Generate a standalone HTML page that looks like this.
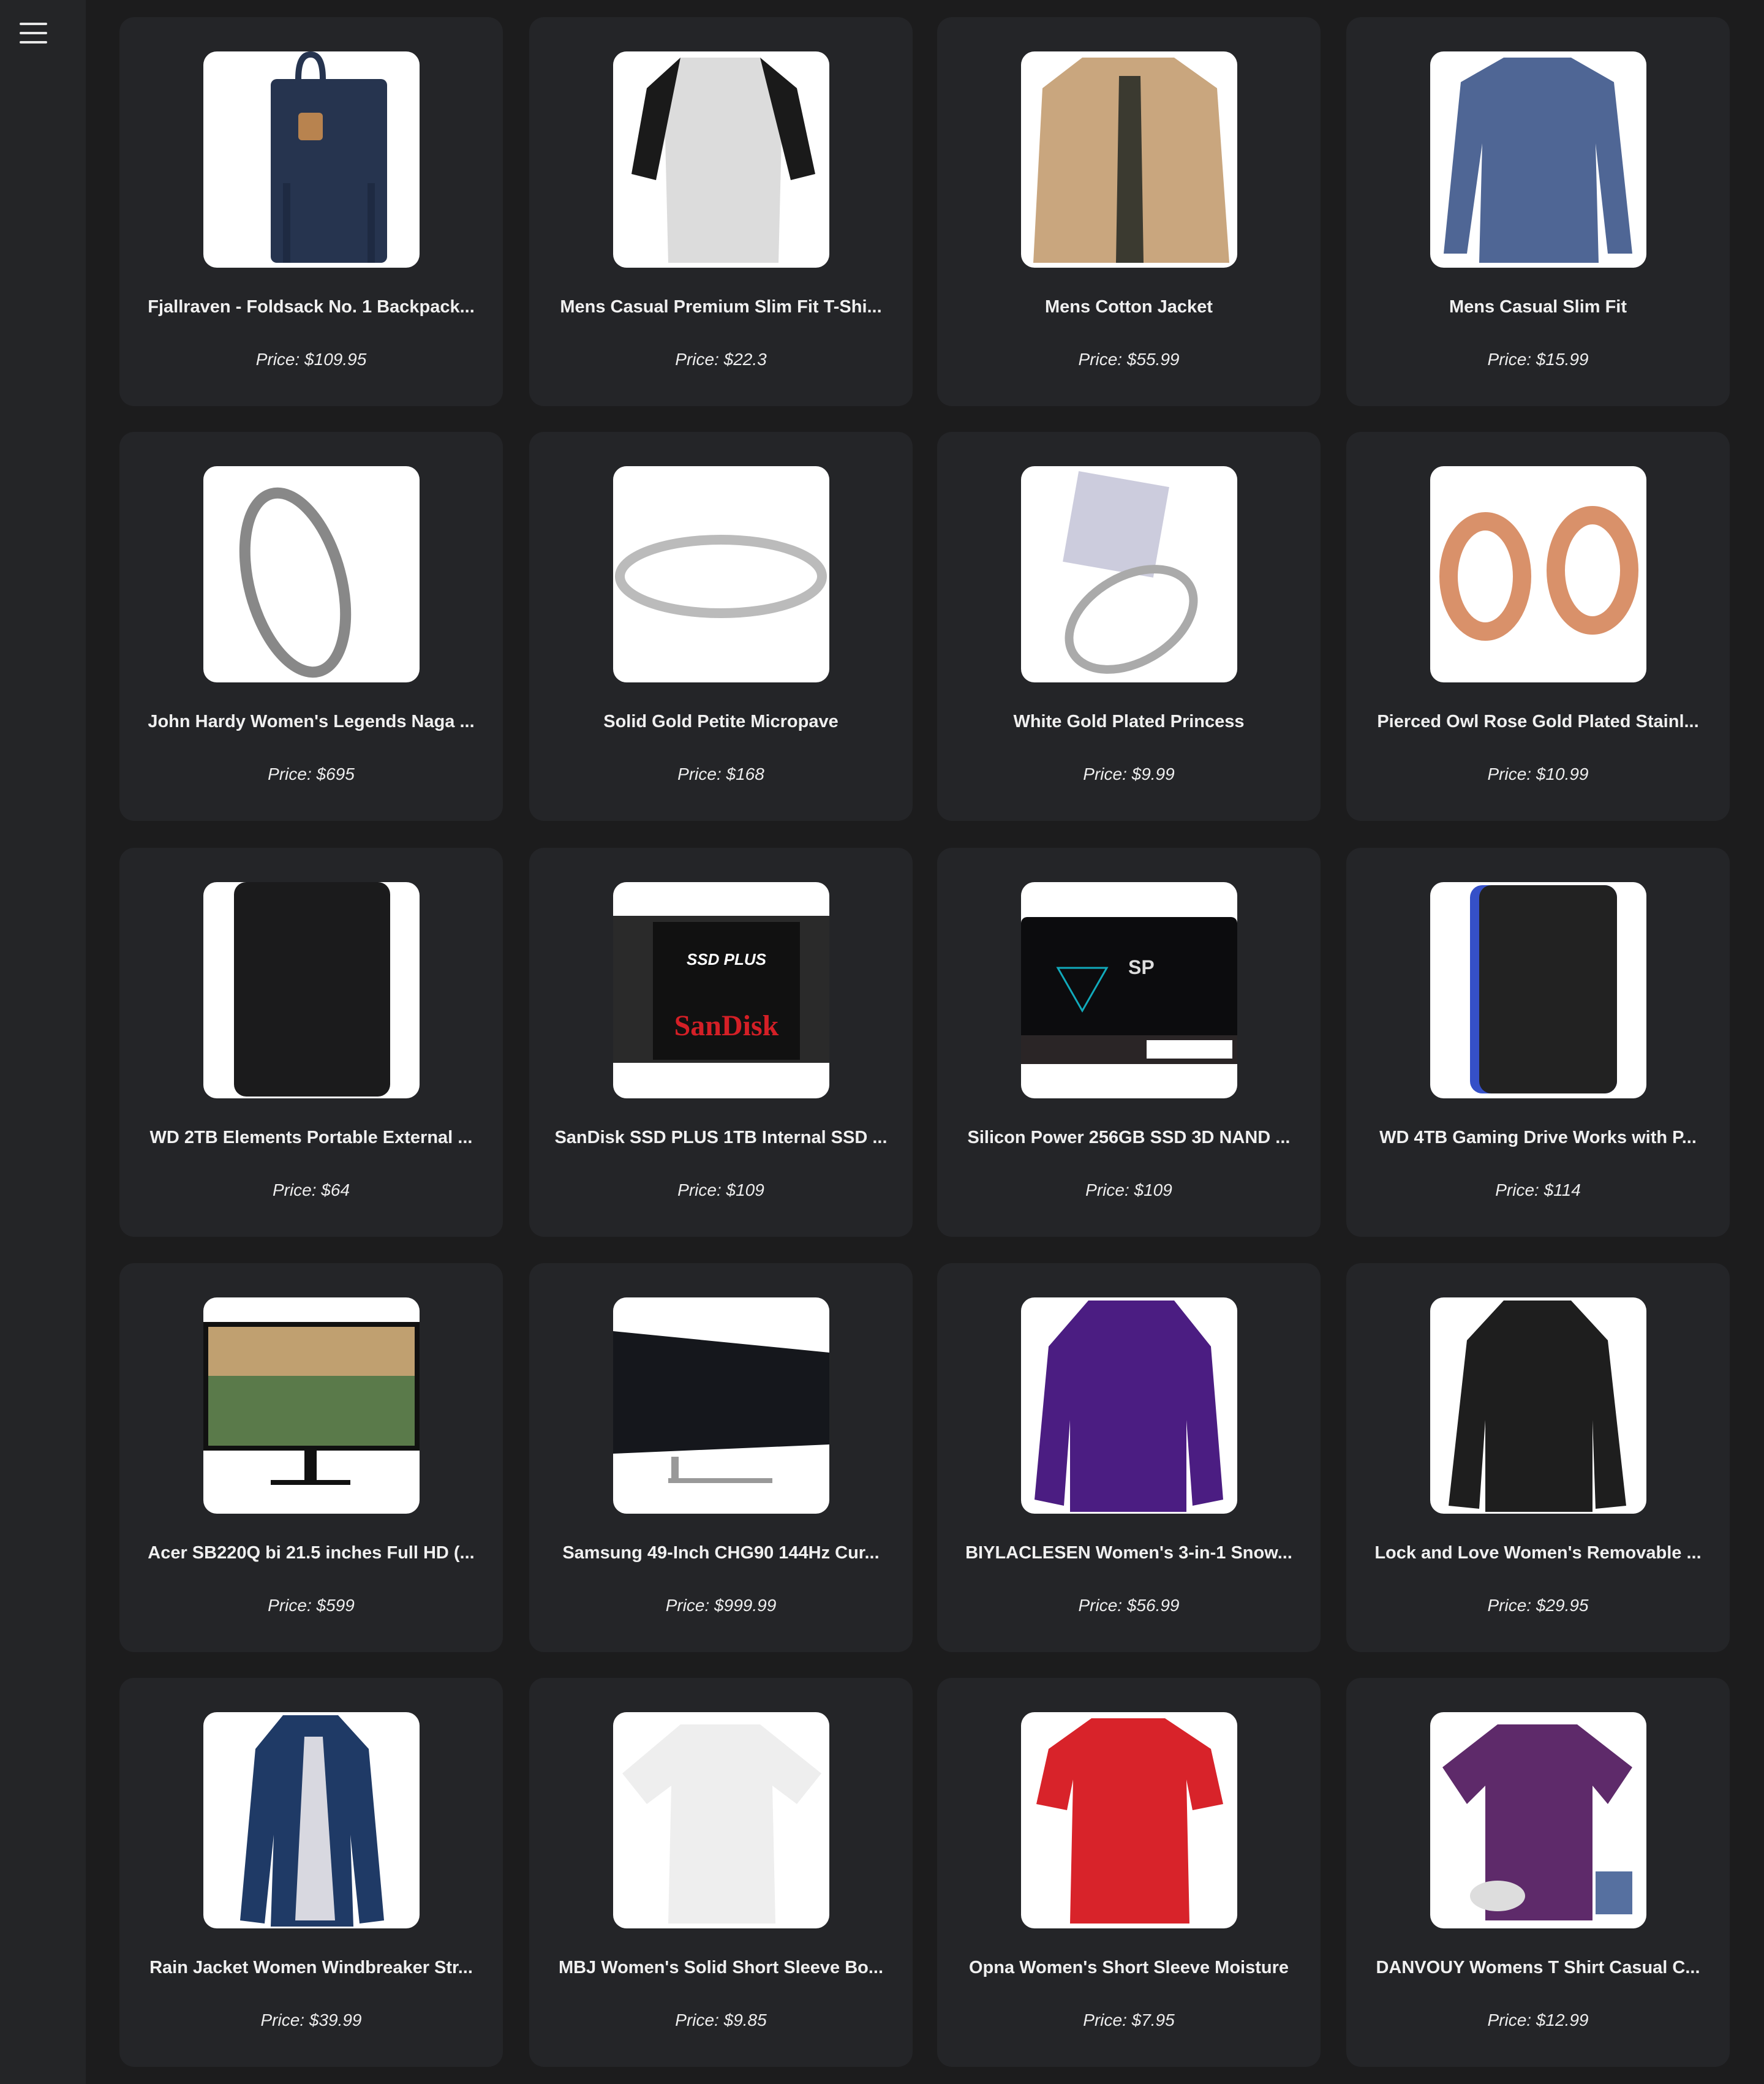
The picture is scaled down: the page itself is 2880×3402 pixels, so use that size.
<!DOCTYPE html>
<html><head><meta charset="utf-8"><style>
html,body{margin:0;padding:0}
body{width:2880px;height:3402px;background:#1c1c1d;position:relative;overflow:hidden;font-family:"Liberation Sans",sans-serif}
.side{position:absolute;left:0;top:0;width:140px;height:3402px;background:#242527}
.hb{position:absolute;left:32px;width:45px;height:4px;background:#e8e8e8;border-radius:2px}
.card{position:absolute;width:626px;height:635px;background:#242528;border-radius:24px}
.img{position:absolute;left:137px;top:56px;width:353px;height:353px;background:#fff;border-radius:22px;overflow:hidden}
.img svg{width:353px;height:353px;display:block}
.t{position:absolute;left:10px;right:10px;top:457px;text-align:center;color:#f0f0f0;font-weight:bold;font-size:29px;letter-spacing:0;white-space:nowrap}
.p{position:absolute;left:0;right:0;top:543px;text-align:center;color:#eee;font-style:italic;font-size:28px}
</style></head><body>
<div class="side"><div class="hb" style="top:37px"></div><div class="hb" style="top:52px"></div><div class="hb" style="top:67px"></div></div>

<!-- row 1 -->
<div class="card" style="left:195px;top:28px"><div class="img"><svg viewBox="0 0 353 353"><rect x="110" y="45" width="190" height="300" rx="10" fill="#26344f"/><path d="M155 45 q0-40 20-40 q20 0 20 40" stroke="#26344f" stroke-width="10" fill="none"/><rect x="155" y="100" width="40" height="45" rx="6" fill="#b8834f"/><rect x="130" y="215" width="12" height="130" fill="#1e2a42"/><rect x="268" y="215" width="12" height="130" fill="#1e2a42"/></svg></div><div class="t">Fjallraven - Foldsack No. 1 Backpack...</div><div class="p">Price: $109.95</div></div>
<div class="card" style="left:864px;top:28px"><div class="img"><svg viewBox="0 0 353 353"><path d="M110 10 L240 10 L300 60 L330 200 L290 210 L275 140 L270 345 L90 345 L85 140 L70 210 L30 200 L55 60 Z" fill="#dcdcdc"/><path d="M110 10 L55 60 L30 200 L70 210 L90 110 Z M240 10 L300 60 L330 200 L290 210 L265 110Z" fill="#1a1a1a"/></svg></div><div class="t">Mens Casual Premium Slim Fit T-Shi...</div><div class="p">Price: $22.3</div></div>
<div class="card" style="left:1530px;top:28px"><div class="img"><svg viewBox="0 0 353 353"><path d="M100 10 L250 10 L320 60 L340 345 L20 345 L35 60 Z" fill="#c9a67e"/><path d="M160 40 L195 40 L200 345 L155 345Z" fill="#3b3a30"/></svg></div><div class="t">Mens Cotton Jacket</div><div class="p">Price: $55.99</div></div>
<div class="card" style="left:2198px;top:28px"><div class="img"><svg viewBox="0 0 353 353"><path d="M120 10 L230 10 L300 50 L330 330 L290 330 L270 150 L275 345 L80 345 L85 150 L60 330 L22 330 L50 50 Z" fill="#4f6695"/></svg></div><div class="t">Mens Casual Slim Fit</div><div class="p">Price: $15.99</div></div>

<!-- row 2 -->
<div class="card" style="left:195px;top:705px"><div class="img"><svg viewBox="0 0 353 353"><ellipse cx="150" cy="190" rx="75" ry="150" transform="rotate(-15 150 190)" stroke="#888" stroke-width="18" fill="none"/></svg></div><div class="t">John Hardy Women's Legends Naga ...</div><div class="p">Price: $695</div></div>
<div class="card" style="left:864px;top:705px"><div class="img"><svg viewBox="0 0 353 353"><ellipse cx="176" cy="180" rx="165" ry="60" stroke="#bbb" stroke-width="16" fill="none"/></svg></div><div class="t">Solid Gold Petite Micropave</div><div class="p">Price: $168</div></div>
<div class="card" style="left:1530px;top:705px"><div class="img"><svg viewBox="0 0 353 353"><rect x="80" y="20" width="150" height="150" fill="#ccd" transform="rotate(10 155 95)"/><ellipse cx="180" cy="250" rx="110" ry="70" stroke="#aaa" stroke-width="14" fill="none" transform="rotate(-30 180 250)"/></svg></div><div class="t">White Gold Plated Princess</div><div class="p">Price: $9.99</div></div>
<div class="card" style="left:2198px;top:705px"><div class="img"><svg viewBox="0 0 353 353"><ellipse cx="90" cy="180" rx="60" ry="90" stroke="#d9916a" stroke-width="30" fill="none"/><ellipse cx="265" cy="170" rx="60" ry="90" stroke="#d9916a" stroke-width="30" fill="none"/></svg></div><div class="t">Pierced Owl Rose Gold Plated Stainl...</div><div class="p">Price: $10.99</div></div>

<!-- row 3 -->
<div class="card" style="left:195px;top:1384px"><div class="img"><svg viewBox="0 0 353 353"><rect x="50" y="0" width="255" height="350" rx="20" fill="#1b1b1c"/></svg></div><div class="t">WD 2TB Elements Portable External ...</div><div class="p">Price: $64</div></div>
<div class="card" style="left:864px;top:1384px"><div class="img"><svg viewBox="0 0 353 353"><rect x="0" y="55" width="353" height="240" fill="#2a2a2a"/><rect x="65" y="65" width="240" height="225" fill="#111"/><text x="185" y="250" text-anchor="middle" fill="#d41f26" font-size="48" font-family="Liberation Serif" font-weight="bold">SanDisk</text><text x="185" y="135" text-anchor="middle" fill="#fff" font-size="26" font-style="italic" font-weight="bold">SSD PLUS</text></svg></div><div class="t">SanDisk SSD PLUS 1TB Internal SSD ...</div><div class="p">Price: $109</div></div>
<div class="card" style="left:1530px;top:1384px"><div class="img"><svg viewBox="0 0 353 353"><rect x="0" y="57" width="353" height="240" rx="10" fill="#0c0c0e"/><rect x="0" y="250" width="353" height="47" fill="#2a2526"/><rect x="205" y="258" width="140" height="30" fill="#fff"/><path d="M60 140 l40 70 l40 -70z" stroke="#1ab" stroke-width="3" fill="none"/><text x="175" y="150" fill="#ddd" font-size="32" font-weight="bold">SP</text></svg></div><div class="t">Silicon Power 256GB SSD 3D NAND ...</div><div class="p">Price: $109</div></div>
<div class="card" style="left:2198px;top:1384px"><div class="img"><svg viewBox="0 0 353 353"><rect x="65" y="5" width="240" height="340" rx="20" fill="#3550c8"/><rect x="80" y="5" width="225" height="340" rx="20" fill="#222"/></svg></div><div class="t">WD 4TB Gaming Drive Works with P...</div><div class="p">Price: $114</div></div>

<!-- row 4 -->
<div class="card" style="left:195px;top:2062px"><div class="img"><svg viewBox="0 0 353 353"><rect x="0" y="40" width="353" height="210" fill="#111"/><rect x="8" y="48" width="337" height="194" fill="#5a7a4a"/><rect x="8" y="48" width="337" height="80" fill="#c0a070"/><rect x="165" y="250" width="20" height="50" fill="#111"/><rect x="110" y="298" width="130" height="8" fill="#111"/></svg></div><div class="t">Acer SB220Q bi 21.5 inches Full HD (...</div><div class="p">Price: $599</div></div>
<div class="card" style="left:864px;top:2062px"><div class="img"><svg viewBox="0 0 353 353"><path d="M0 55 L353 90 L353 240 L0 255Z" fill="#15171c"/><rect x="95" y="260" width="12" height="40" fill="#999"/><rect x="90" y="295" width="170" height="8" fill="#999"/></svg></div><div class="t">Samsung 49-Inch CHG90 144Hz Cur...</div><div class="p">Price: $999.99</div></div>
<div class="card" style="left:1530px;top:2062px"><div class="img"><svg viewBox="0 0 353 353"><path d="M110 5 L250 5 L310 80 L330 330 L280 340 L270 200 L270 350 L80 350 L80 200 L70 340 L22 330 L45 80Z" fill="#4b1d82"/></svg></div><div class="t">BIYLACLESEN Women's 3-in-1 Snow...</div><div class="p">Price: $56.99</div></div>
<div class="card" style="left:2198px;top:2062px"><div class="img"><svg viewBox="0 0 353 353"><path d="M120 5 L230 5 L290 70 L320 340 L270 345 L265 200 L265 350 L90 350 L90 200 L80 345 L30 340 L60 70Z" fill="#1e1e1e"/></svg></div><div class="t">Lock and Love Women's Removable ...</div><div class="p">Price: $29.95</div></div>

<!-- row 5 -->
<div class="card" style="left:195px;top:2739px"><div class="img"><svg viewBox="0 0 353 353"><path d="M130 5 L220 5 L270 60 L295 340 L255 345 L240 200 L245 350 L110 350 L115 200 L100 345 L60 340 L85 60Z" fill="#1f3a66"/><path d="M165 40 L195 40 L215 340 L150 340Z" fill="#d8d8e0"/></svg></div><div class="t">Rain Jacket Women Windbreaker Str...</div><div class="p">Price: $39.99</div></div>
<div class="card" style="left:864px;top:2739px"><div class="img"><svg viewBox="0 0 353 353"><path d="M110 20 L240 20 L340 100 L300 150 L260 120 L265 345 L90 345 L95 120 L55 150 L15 100Z" fill="#eeeeee"/></svg></div><div class="t">MBJ Women's Solid Short Sleeve Bo...</div><div class="p">Price: $9.85</div></div>
<div class="card" style="left:1530px;top:2739px"><div class="img"><svg viewBox="0 0 353 353"><path d="M115 10 L235 10 L310 60 L330 150 L280 160 L270 110 L275 345 L80 345 L85 110 L75 160 L25 150 L45 60Z" fill="#d8232a"/></svg></div><div class="t">Opna Women's Short Sleeve Moisture</div><div class="p">Price: $7.95</div></div>
<div class="card" style="left:2198px;top:2739px"><div class="img"><svg viewBox="0 0 353 353"><path d="M110 20 L240 20 L330 90 L290 150 L265 120 L265 340 L90 340 L90 120 L60 150 L20 90Z" fill="#5e2a6a"/><ellipse cx="110" cy="300" rx="45" ry="25" fill="#ddd"/><rect x="270" y="260" width="60" height="70" fill="#5670a0"/></svg></div><div class="t">DANVOUY Womens T Shirt Casual C...</div><div class="p">Price: $12.99</div></div>
</body></html>
